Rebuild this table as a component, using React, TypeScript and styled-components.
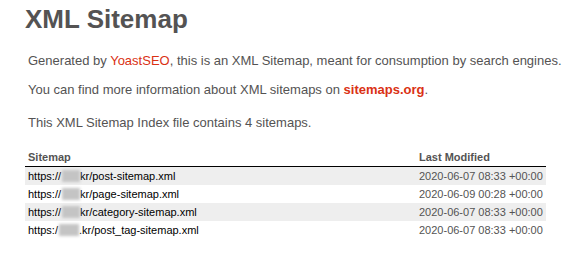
import React from "react";
import styled, { createGlobalStyle } from "styled-components";

const Global = createGlobalStyle`
  html, body { margin: 0; padding: 0; background: #fff; }
  body {
    font-family: Helvetica, "Liberation Sans", Arial, sans-serif;
    font-size: 13px;
    color: #545353;
  }
`;

const Content = styled.div`
  padding: 0 0 0 25px;
  width: 538px;
  overflow: hidden;
`;

const Title = styled.h1`
  margin: 4px 0 0;
  font-size: 26px;
  font-weight: bold;
  line-height: normal;
  color: #545353;
`;

const Expl = styled.p<{ $top: number }>`
  margin: ${(p) => p.$top}px 3px 0;
  line-height: 1.2em;
  white-space: nowrap;
`;

const RedLink = styled.a<{ $bold?: boolean }>`
  color: #da3114;
  font-weight: ${(p) => (p.$bold ? 700 : 400)};
  text-decoration: none;
`;

const Table = styled.table`
  margin-top: 17px;
  width: 521px;
  border: none;
  border-collapse: collapse;
  table-layout: fixed;
`;

const Th = styled.th<{ $w: number }>`
  width: ${(p) => p.$w}px;
  text-align: left;
  font-size: 11px;
  padding: 3px;
  border-bottom: 1px solid #000;
  line-height: normal;
  box-sizing: border-box;
`;

const Row = styled.tr<{ $striped: boolean }>`
  background: ${(p) => (p.$striped ? "#eee" : "transparent")};
`;

const Td = styled.td`
  font-size: 11px;
  padding: 3px;
  line-height: normal;
  white-space: nowrap;
`;

const UrlLink = styled.a`
  color: #000;
  text-decoration: none;
`;

const Blur = styled.span<{ $w: number; $ml?: number }>`
  display: inline-block;
  width: ${(p) => p.$w}px;
  height: 12px;
  margin-left: ${(p) => p.$ml ?? 0}px;
  vertical-align: -2px;
  background: #c4c4c4;
  filter: blur(1.5px);
`;

const rows = [
  { pre: "https://", blur: 18, post: "kr/post-sitemap.xml", date: "2020-06-07 08:33 +00:00" },
  { pre: "https://", blur: 18, post: "kr/page-sitemap.xml", date: "2020-06-09 00:28 +00:00" },
  { pre: "https://", blur: 18, post: "kr/category-sitemap.xml", date: "2020-06-07 08:33 +00:00" },
  { pre: "https:/", blur: 20, post: ".kr/post_tag-sitemap.xml", date: "2020-06-07 08:33 +00:00" },
];

export default function App() {
  return (
    <>
      <Global />
      <Content>
        <Title>XML Sitemap</Title>
        <Expl $top={18}>
          Generated by <RedLink href="#">YoastSEO</RedLink>, this is an XML Sitemap, meant for
          consumption by search engines.
        </Expl>
        <Expl $top={13}>
          You can find more information about XML sitemaps on{" "}
          <RedLink href="#" $bold>
            sitemaps.org
          </RedLink>
          .
        </Expl>
        <Expl $top={18}>This XML Sitemap Index file contains 4 sitemaps.</Expl>
        <Table>
          <thead>
            <tr>
              <Th $w={391}>Sitemap</Th>
              <Th $w={130}>Last Modified</Th>
            </tr>
          </thead>
          <tbody>
            {rows.map((r, i) => (
              <Row key={i} $striped={i % 2 === 0}>
                <Td>
                  <UrlLink href="#">
                    {r.pre}
                    <Blur $w={r.blur} $ml={1} />
                    {r.post}
                  </UrlLink>
                </Td>
                <Td>{r.date}</Td>
              </Row>
            ))}
          </tbody>
        </Table>
      </Content>
    </>
  );
}
